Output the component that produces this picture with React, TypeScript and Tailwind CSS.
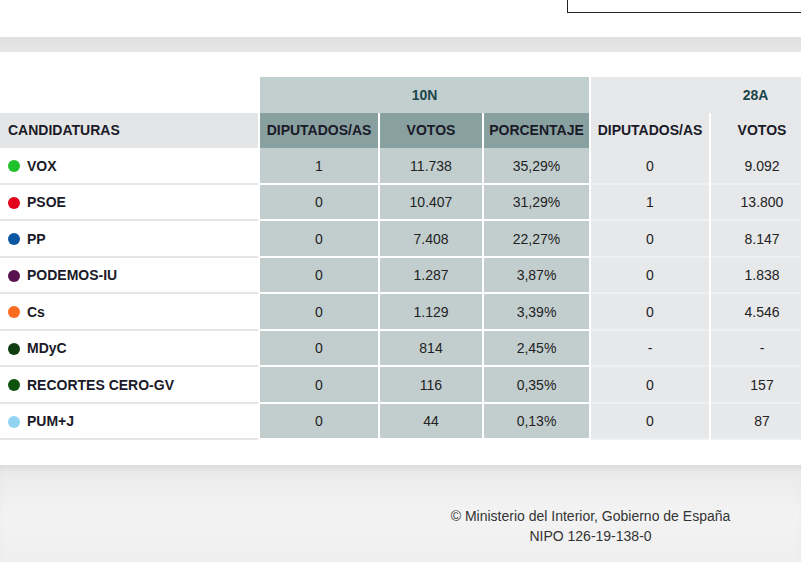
// Resultados 10N vs 28A — tabla por candidatura
const FONT = { fontFamily: '"Liberation Sans", Arial, sans-serif' };

type Row = {
  name: string;
  dot: string;
  d10: string;
  v10: string;
  p10: string;
  d28: string;
  v28: string;
};

const ROWS: Row[] = [
  { name: 'VOX', dot: 'bg-[#1fc12b]', d10: '1', v10: '11.738', p10: '35,29%', d28: '0', v28: '9.092' },
  { name: 'PSOE', dot: 'bg-[#e2001a]', d10: '0', v10: '10.407', p10: '31,29%', d28: '1', v28: '13.800' },
  { name: 'PP', dot: 'bg-[#0b56a2]', d10: '0', v10: '7.408', p10: '22,27%', d28: '0', v28: '8.147' },
  { name: 'PODEMOS-IU', dot: 'bg-[#571250]', d10: '0', v10: '1.287', p10: '3,87%', d28: '0', v28: '1.838' },
  { name: 'Cs', dot: 'bg-[#fa6a21]', d10: '0', v10: '1.129', p10: '3,39%', d28: '0', v28: '4.546' },
  { name: 'MDyC', dot: 'bg-[#0f3e10]', d10: '0', v10: '814', p10: '2,45%', d28: '-', v28: '-' },
  { name: 'RECORTES CERO-GV', dot: 'bg-[#0d530e]', d10: '0', v10: '116', p10: '0,35%', d28: '0', v28: '157' },
  { name: 'PUM+J', dot: 'bg-[#8fd4f3]', d10: '0', v10: '44', p10: '0,13%', d28: '0', v28: '87' },
];

const cellN = 'flex h-[36.5px] shrink-0 items-center justify-center border-b-2 border-white bg-[#c2cece] pt-[2px]';
const cellA = 'flex h-[36.5px] shrink-0 items-center justify-center border-b-2 border-[#eff0f1] bg-[#e7e8ea] pt-[2px]';
const headN = 'flex h-[35px] shrink-0 items-center justify-center bg-[#88a09f]';
const headA = 'flex h-[35px] shrink-0 items-center justify-center bg-[#e6e7e9]';

export default function App() {
  return (
    <div className="w-full overflow-hidden bg-white text-[14px] text-[#222]" style={FONT}>
      {/* top strip */}
      <div className="flex h-[37px] justify-end">
        <div className="h-[13px] w-[234px] border-b border-l border-[#222]" />
      </div>
      <div className="h-[15px] bg-gradient-to-b from-[#e1e1e1] to-[#e6e6e6]" />

      {/* results table */}
      <div className="pt-[25px] pb-[25px]">
        <div className="w-[920px]">
          <div className="flex gap-[2px]">
            <div className="w-[258px] shrink-0" />
            <div className="flex h-9 w-[329px] shrink-0 items-center justify-center bg-[#c2cfcf] font-bold text-[#1b4549]">
              10N
            </div>
            <div className="flex h-9 w-[329px] shrink-0 items-center justify-center bg-[#e7e8ea] font-bold text-[#1b4549]">
              28A
            </div>
          </div>

          <div className="flex gap-[2px] font-bold text-[#1a1a28]">
            <div className="flex h-[35px] w-[258px] shrink-0 items-center bg-[#e4e5e7] pl-2">CANDIDATURAS</div>
            <div className={`${headN} w-[118px]`}>DIPUTADOS/AS</div>
            <div className={`${headN} w-[102px]`}>VOTOS</div>
            <div className={`${headN} w-[105px]`}>PORCENTAJE</div>
            <div className={`${headA} w-[118px]`}>DIPUTADOS/AS</div>
            <div className={`${headA} w-[102px]`}>VOTOS</div>
            <div className={`${headA} w-[105px]`} />
          </div>

          {ROWS.map((r) => (
            <div key={r.name} className="flex gap-[2px]">
              <div className="flex h-[36.5px] w-[258px] shrink-0 items-center gap-[7px] border-b-2 border-[#e6e6e6] pt-[2px] pl-2 font-bold text-[#1a1a28]">
                <span className={`h-3 w-3 rounded-full ${r.dot}`} />
                {r.name}
              </div>
              <div className={`${cellN} w-[118px]`}>{r.d10}</div>
              <div className={`${cellN} w-[102px]`}>{r.v10}</div>
              <div className={`${cellN} w-[105px]`}>{r.p10}</div>
              <div className={`${cellA} w-[118px]`}>{r.d28}</div>
              <div className={`${cellA} w-[102px]`}>{r.v28}</div>
              <div className={`${cellA} w-[105px]`} />
            </div>
          ))}
        </div>
      </div>

      {/* footer */}
      <footer className="h-[97px] bg-gradient-to-b from-[#e9e9e9] via-[#f3f3f3] to-[#efefef] pt-[41px] pl-[380px] text-center leading-5 text-[#333] shadow-[inset_0_6px_8px_-4px_rgba(0,0,0,0.08)]">
        <p>© Ministerio del Interior, Gobierno de España</p>
        <p>NIPO 126-19-138-0</p>
      </footer>
    </div>
  );
}
